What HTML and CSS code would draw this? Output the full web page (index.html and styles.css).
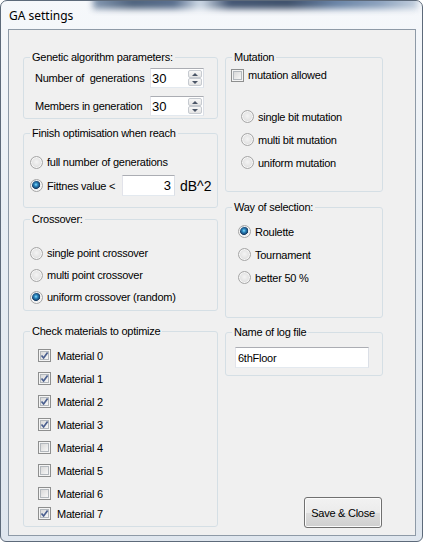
FILE: index.html
```html
<!DOCTYPE html>
<html lang="en">

<head>
	<meta charset="UTF-8">
	<meta name="viewport" content="width=device-width, initial-scale=1.0">
	<title>GA settings</title>
	<link rel="stylesheet" href="styles.css">
</head>

<body>

	<div class="window">
		<div class="titlebar">
			<span class="title">GA settings</span>
		</div>

		<form class="client">
			<div class="column col-left">

				<fieldset class="group params">
					<legend>Genetic algorithm parameters:</legend>
					<div class="group-body">
						<div class="field-row">
							<label class="field-label">Number of&nbsp; generations</label>
							<div class="spin">
								<input type="text" value="30">
								<span class="spin-btns"><span class="up"></span><span class="down"></span></span>
							</div>
						</div>
						<div class="field-row">
							<label class="field-label">Members in generation</label>
							<div class="spin">
								<input type="text" value="30">
								<span class="spin-btns"><span class="up"></span><span class="down"></span></span>
							</div>
						</div>
					</div>
				</fieldset>

				<fieldset class="group finish">
					<legend>Finish optimisation when reach</legend>
					<div class="group-body">
						<label class="radio"><span class="dot"></span>full number of generations</label>
						<div class="radio fitness">
							<span class="dot on"></span>
							<span class="fitness-label">Fittnes value &lt;</span>
							<input type="text" class="value-box" value="3">
							<span class="unit">dB^2</span>
						</div>
					</div>
				</fieldset>

				<fieldset class="group crossover">
					<legend>Crossover:</legend>
					<div class="group-body">
						<label class="radio"><span class="dot"></span>single point crossover</label>
						<label class="radio"><span class="dot"></span>multi point crossover</label>
						<label class="radio"><span class="dot on"></span>uniform crossover (random)</label>
					</div>
				</fieldset>

				<fieldset class="group materials">
					<legend>Check materials to optimize</legend>
					<div class="group-body">
						<label class="check"><span class="box on"><svg viewBox="0 0 9 9"><path d="M1.5 4.5 L3.6 7 L7.6 1.6"/></svg></span>Material 0</label>
						<label class="check"><span class="box on"><svg viewBox="0 0 9 9"><path d="M1.5 4.5 L3.6 7 L7.6 1.6"/></svg></span>Material 1</label>
						<label class="check"><span class="box on"><svg viewBox="0 0 9 9"><path d="M1.5 4.5 L3.6 7 L7.6 1.6"/></svg></span>Material 2</label>
						<label class="check"><span class="box on"><svg viewBox="0 0 9 9"><path d="M1.5 4.5 L3.6 7 L7.6 1.6"/></svg></span>Material 3</label>
						<label class="check"><span class="box"></span>Material 4</label>
						<label class="check"><span class="box"></span>Material 5</label>
						<label class="check"><span class="box"></span>Material 6</label>
						<label class="check last"><span class="box on"><svg viewBox="0 0 9 9"><path d="M1.5 4.5 L3.6 7 L7.6 1.6"/></svg></span>Material 7</label>
					</div>
				</fieldset>

			</div>

			<div class="column col-right">

				<fieldset class="group mutation">
					<legend>Mutation</legend>
					<div class="group-body">
						<label class="check allow"><span class="box"></span>mutation allowed</label>
						<div class="mutation-types">
							<label class="radio"><span class="dot"></span>single bit mutation</label>
							<label class="radio"><span class="dot"></span>multi bit mutation</label>
							<label class="radio"><span class="dot"></span>uniform mutation</label>
						</div>
					</div>
				</fieldset>

				<fieldset class="group selection">
					<legend>Way of selection:</legend>
					<div class="group-body">
						<label class="radio"><span class="dot on"></span>Roulette</label>
						<label class="radio"><span class="dot"></span>Tournament</label>
						<label class="radio"><span class="dot"></span>better 50 %</label>
					</div>
				</fieldset>

				<fieldset class="group logfile">
					<legend>Name of log file</legend>
					<div class="group-body">
						<input type="text" class="log-name" value="6thFloor">
					</div>
				</fieldset>

				<button class="save-button" type="submit">Save &amp; Close</button>
			</div>
		</form>
	</div>

</body>
</html>
```

FILE: styles.css
```css
body {
	margin: 0;
	background-color: #ffffff;
	font-family: "Liberation Sans", Arial, sans-serif;
	font-size: 11px;
	letter-spacing: -0.25px;
	color: #000000;
}

/* Window frame */
.window {
	width: 423px;
	height: 542px;
	box-sizing: border-box;
	border: 1px solid #5d6a7a;
	border-radius: 7px 7px 6px 6px;
	background: linear-gradient(to bottom, #f6f8fb 0%, #e8eef4 40%, #dfe6ee 100%);
	padding: 0 6px 5px 7px;
	display: flex;
	flex-direction: column;
	overflow: hidden;
}

.titlebar {
	height: 28px;
	flex: none;
	display: flex;
	align-items: center;
	position: relative;
}

/* blurred glass strip along the top edge */
.titlebar::before {
	content: "";
	position: absolute;
	left: 85px;
	right: -2px;
	top: -6px;
	height: 14px;
	background: linear-gradient(to right, #6f86a3 0%, #2f4766 12%, #3b5478 25%, #c9d6e4 33%, #22385a 42%, #1c3150 60%, #4e6d95 75%, #7690b0 88%, #b9c7d8 100%);
	filter: blur(3px);
	opacity: 0.85;
}

.title {
	position: relative;
	font-family: "Noto Sans", "Open Sans", sans-serif;
	font-size: 12px;
	letter-spacing: 0;
	margin-left: 1px;
	margin-top: 1px;
	color: #000000;
}

/* Client area */
.client {
	height: 507px;
	box-sizing: border-box;
	border: 1px solid #8e9aa7;
	background-color: #f0f0f0;
	margin: 0;
	padding: 21px 0 0 14px;
	display: flex;
	gap: 7px;
}

.column {
	display: flex;
	flex-direction: column;
}

.col-left {
	width: 195px;
}

.col-right {
	width: 158px;
}

/* Group boxes */
.group {
	margin: 0;
	padding: 0;
	border: 1px solid #d5dfe5;
	border-radius: 3px;
	box-sizing: border-box;
	min-width: 0;
}

.group legend {
	padding: 0 2px;
	margin-left: 6px;
	line-height: 13px;
}

.group-body {
	display: flex;
	flex-direction: column;
}

.params {
	height: 68px;
}

.params .group-body {
	padding: 4px 0 0 11px;
	gap: 8px;
}

.finish {
	height: 81px;
	margin-top: 8px;
}

.finish .group-body {
	padding: 14px 0 0 6px;
	gap: 5px;
}

.crossover {
	height: 98px;
	margin-top: 5px;
}

.crossover .group-body {
	padding: 16px 0 0 6px;
}

.crossover .radio {
	height: 22px;
}

.materials {
	height: 202px;
	margin-top: 14px;
}

.materials .group-body {
	padding: 6px 0 0 14px;
}

.mutation {
	height: 141px;
}

.mutation .group-body {
	padding: 3px 0 0 5px;
}

.mutation-types {
	display: flex;
	flex-direction: column;
	margin: 22px 0 0 10px;
}

.mutation-types .radio {
	height: 23px;
}

.selection {
	height: 117px;
	margin-top: 9px;
}

.selection .group-body {
	padding: 6px 0 0 12px;
}

.selection .radio {
	height: 23px;
}

.logfile {
	height: 50px;
	margin-top: 8px;
}

.logfile .group-body {
	padding: 8px 0 0 9px;
}

/* Numeric up/down rows */
.field-row {
	display: flex;
	align-items: center;
	height: 20px;
}

.field-label {
	width: 115px;
}

.spin {
	display: flex;
	width: 54px;
	height: 20px;
	box-sizing: border-box;
	border: 1px solid;
	border-color: #abadb3 #dbdfe6 #e3e9ef #e2e3ea;
	background-color: #ffffff;
}

.spin input {
	width: 100%;
	min-width: 0;
	border: none;
	outline: none;
	background: transparent;
	padding: 0 0 0 1px;
	font-family: "Liberation Sans", Arial, sans-serif;
	font-size: 13px;
	letter-spacing: 0;
}

.spin-btns {
	display: flex;
	flex-direction: column;
	width: 15px;
	flex: none;
	padding: 1px 1px 1px 0;
	box-sizing: border-box;
}

.spin-btns span {
	flex: 1;
	display: flex;
	align-items: center;
	justify-content: center;
	border: 1px solid #c6cad0;
	border-radius: 2px;
	background: linear-gradient(to bottom, #f7f7f7, #e4e4e4);
}

.spin-btns .up::after {
	content: "";
	border-left: 3px solid transparent;
	border-right: 3px solid transparent;
	border-bottom: 3px solid #4a5566;
}

.spin-btns .down::after {
	content: "";
	border-left: 3px solid transparent;
	border-right: 3px solid transparent;
	border-top: 3px solid #4a5566;
}

/* Radio buttons */
.radio {
	display: flex;
	align-items: center;
	height: 16px;
}

.dot {
	width: 13px;
	height: 13px;
	box-sizing: border-box;
	flex: none;
	border-radius: 50%;
	border: 1px solid #a6a6a6;
	background: radial-gradient(circle at 50% 45%, #f4f4f4 0, #e6e6e6 45%, #cfcfcf 100%);
	box-shadow: inset 0 0 0 1px #f7f7f7;
	margin-right: 4px;
}

.dot.on {
	background: radial-gradient(circle at 45% 42%, #8fe0ff 0, #2d8cc4 1.6px, #1c4f7e 3.4px, #1a3e63 4px, #eeeeee 4.6px, #e2e2e2 100%);
}

.fitness {
	height: 21px;
}

.fitness-label {
	width: 75px;
}

.value-box {
	width: 53px;
	height: 21px;
	box-sizing: border-box;
	border: 1px solid;
	border-color: #abadb3 #dbdfe6 #e3e9ef #e2e3ea;
	background-color: #ffffff;
	padding: 0 3px 0 0;
	text-align: right;
	font-family: "Liberation Sans", Arial, sans-serif;
	font-size: 13px;
	outline: none;
}

.unit {
	margin-left: 5px;
	font-size: 14px;
	letter-spacing: 0;
}

/* Check boxes */
.check {
	display: flex;
	align-items: center;
	height: 23px;
}

.check.last {
	margin-top: -3px;
}

.check.allow {
	height: 16px;
}

.check.allow .box {
	margin-right: 4px;
}

.box {
	width: 13px;
	height: 13px;
	box-sizing: border-box;
	flex: none;
	border: 1px solid #8e8f8f;
	background-color: #f4f4f4;
	padding: 1px;
	margin-right: 6px;
	display: flex;
}

.box::before {
	content: "";
	flex: 1;
	border: 1px solid #b3b8bd;
	background: linear-gradient(135deg, #d9d9d9, #f7f7f7);
}

.box.on {
	position: relative;
}

.box svg {
	position: absolute;
	left: 1px;
	top: 1px;
	width: 9px;
	height: 9px;
	fill: none;
	stroke: #4a5f8f;
	stroke-width: 1.7;
}

/* Text input */
.log-name {
	width: 134px;
	height: 21px;
	box-sizing: border-box;
	border: 1px solid;
	border-color: #abadb3 #dbdfe6 #e3e9ef #e2e3ea;
	background-color: #ffffff;
	padding: 0 0 0 2px;
	font-family: "Liberation Sans", Arial, sans-serif;
	font-size: 11px;
	letter-spacing: -0.25px;
	outline: none;
}

/* Button */
.save-button {
	align-self: flex-end;
	width: 78px;
	height: 31px;
	margin: 121px 1px 0 0;
	border: 1px solid #707070;
	border-radius: 3px;
	background: linear-gradient(to bottom, #f2f2f2 0%, #ebebeb 50%, #dddddd 51%, #cfcfcf 100%);
	box-shadow: inset 0 0 0 1px #fbfbfb;
	font-family: "Liberation Sans", Arial, sans-serif;
	font-size: 11px;
	letter-spacing: -0.25px;
	color: #000000;
	padding: 0;
	cursor: pointer;
}
```
